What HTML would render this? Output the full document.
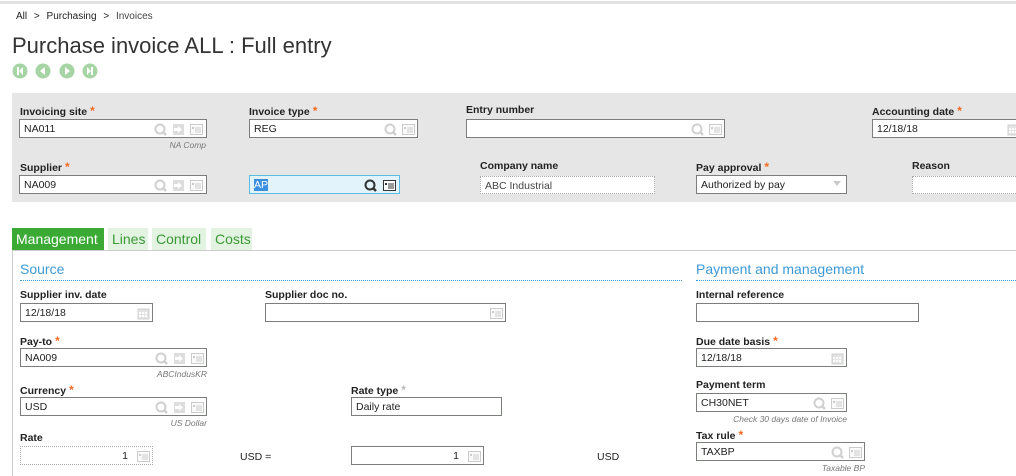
<!DOCTYPE html>
<html><head><meta charset="utf-8"><style>
*{box-sizing:border-box;margin:0;padding:0}
body{width:1016px;height:476px;overflow:hidden;background:#fff;font-family:"Liberation Sans",sans-serif;color:#222;position:relative}
.a{position:absolute}
.lb{position:absolute;font-size:10.5px;font-weight:bold;color:#222;white-space:nowrap}
.st{color:#f26b21;font-size:12px;margin-left:3px}
.sg{color:#bbb;font-size:12px;margin-left:3px}
.in{position:absolute;height:19px;border:1px solid #7a7f7a;background:#fff;font-size:10.5px;padding:3px 4px;white-space:nowrap;overflow:hidden}
.dt{border:1px dotted #aaa}
.ic{position:absolute;top:3px}
.sub{position:absolute;font-size:8.5px;font-style:italic;color:#777;text-align:right;white-space:nowrap}
.tab{position:absolute;top:228px;height:22px;font-size:14px;padding:3px 4px;color:#3a9a35;background:#e2f3e2}
.h{position:absolute;font-size:14px;color:#3d9ad8}
.dl{position:absolute;border-top:1px dotted #3d9ad8;height:0}
</style></head><body>
<div class="a" style="left:0;top:1px;width:1016px;height:3px;background:#e3e3e3"></div>
<div class="a" style="left:16px;top:11px;font-size:10px">All <span style="margin:0 4px">&gt;</span> Purchasing <span style="margin:0 4px">&gt;</span> <span style="color:#444">Invoices</span></div>
<div class="a" style="left:12px;top:33px;font-size:22px;color:#333">Purchase invoice ALL : Full entry</div>
<svg class="a" style="left:12px;top:63px" width="88" height="16">
<g fill="#a6d4a4"><circle cx="8" cy="8" r="7.5"/><circle cx="31" cy="8" r="7.5"/><circle cx="55" cy="8" r="7.5"/><circle cx="78" cy="8" r="7.5"/></g>
<g fill="#fff"><rect x="5" y="4" width="2" height="8"/><path d="M11 4 L7 8 L11 12Z"/><path d="M33 4 L28 8 L33 12Z"/><path d="M53 4 L58 8 L53 12Z"/><path d="M75 4 L79 8 L75 12Z"/><rect x="79" y="4" width="2" height="8"/></g></svg>

<div class="a" style="left:12px;top:93px;width:1004px;height:109px;background:#e6e6e6"></div>

<svg width="0" height="0" style="position:absolute"><defs>
<g id="q"><circle cx="6" cy="6" r="4.5" fill="none" stroke="#d0d0d0" stroke-width="2"/><line x1="9" y1="9" x2="12" y2="12" stroke="#d0d0d0" stroke-width="2.5"/></g>
<g id="qd"><circle cx="6" cy="6" r="4.5" fill="none" stroke="#333" stroke-width="2"/><line x1="9" y1="9" x2="12" y2="12" stroke="#333" stroke-width="2.5"/></g>
<g id="ar"><rect x="1" y="1" width="11" height="11" fill="#ddd"/><path d="M2 5h4V3l4 3.5-4 3.5V8H2z" fill="#fff"/></g>
<g id="ls"><rect x="0.5" y="1.5" width="12" height="10" fill="#fafafa" stroke="#ccc"/><line x1="5" y1="5" x2="11" y2="5" stroke="#ccc"/><line x1="5" y1="7" x2="11" y2="7" stroke="#ccc"/><line x1="5" y1="9" x2="11" y2="9" stroke="#ccc"/><rect x="2" y="4" width="2" height="2" fill="#ccc"/></g>
<g id="lsd"><rect x="0.5" y="1.5" width="12" height="10" fill="#fff" stroke="#333"/><line x1="5" y1="5" x2="11" y2="5" stroke="#333"/><line x1="5" y1="7" x2="11" y2="7" stroke="#333"/><line x1="5" y1="9" x2="11" y2="9" stroke="#333"/><rect x="2" y="4" width="2" height="2" fill="#333"/></g>
<g id="cal"><rect x="1" y="2" width="11" height="10" fill="#e4e4e4" stroke="#d0d0d0"/><g fill="#fff"><rect x="2" y="5" width="2" height="2"/><rect x="5" y="5" width="2" height="2"/><rect x="8" y="5" width="2" height="2"/><rect x="2" y="8" width="2" height="2"/><rect x="5" y="8" width="2" height="2"/><rect x="8" y="8" width="2" height="2"/></g></g>
</defs></svg>

<!-- header fields -->
<div class="lb" style="left:20px;top:104px">Invoicing site<span class="st">*</span></div>
<div class="in" style="left:19px;top:119px;width:188px">NA011<svg class="ic" style="left:134px" width="52" height="13"><use href="#q"/><use href="#ar" x="18"/><use href="#ls" x="36"/></svg></div>
<div class="sub" style="left:150px;top:140px;width:56px">NA Comp</div>
<div class="lb" style="left:249px;top:104px">Invoice type<span class="st">*</span></div>
<div class="in" style="left:249px;top:119px;width:169px">REG<svg class="ic" style="left:134px" width="33" height="13"><use href="#q"/><use href="#ls" x="18"/></svg></div>
<div class="lb" style="left:466px;top:104px">Entry number</div>
<div class="in" style="left:466px;top:119px;width:259px"><svg class="ic" style="left:224px" width="33" height="13"><use href="#q"/><use href="#ls" x="18"/></svg></div>
<div class="lb" style="left:872px;top:104px">Accounting date<span class="st">*</span></div>
<div class="in" style="left:872px;top:119px;width:160px">12/18/18<svg class="ic" style="left:134px" width="14" height="13"><use href="#cal"/></svg></div>

<div class="lb" style="left:20px;top:160px">Supplier<span class="st">*</span></div>
<div class="in" style="left:19px;top:175px;width:188px">NA009<svg class="ic" style="left:134px" width="52" height="13"><use href="#q"/><use href="#ar" x="18"/><use href="#ls" x="36"/></svg></div>
<div class="in" style="left:249px;top:175px;width:151px;background:#e2f3fb;border-color:#5bbde3"><span style="background:#3b8fe0;color:#fff">AP</span><svg class="ic" style="left:114px" width="33" height="13"><use href="#qd"/><use href="#lsd" x="19"/></svg></div>
<div class="lb" style="left:480px;top:160px">Company name</div>
<div class="in dt" style="left:480px;top:176px;width:175px;height:18px;color:#444">ABC Industrial</div>
<div class="lb" style="left:696px;top:160px">Pay approval<span class="st">*</span></div>
<div class="in" style="left:696px;top:175px;width:151px">Authorized by pay<svg class="ic" style="left:136px;top:5px" width="8" height="5"><path d="M0 0h8L4 5z" fill="#ccc"/></svg></div>
<div class="lb" style="left:912px;top:160px">Reason</div>
<div class="in dt" style="left:912px;top:176px;width:120px;height:18px"></div>

<!-- tabs -->
<div class="tab" style="left:12px;width:92px;background:#3aaa35;color:#fff">Management</div>
<div class="tab" style="left:108px;width:40px">Lines</div>
<div class="tab" style="left:152px;width:54px">Control</div>
<div class="tab" style="left:211px;width:41px">Costs</div>
<div class="a" style="left:12px;top:250px;width:1004px;height:1px;background:#ccc"></div>
<div class="a" style="left:12px;top:250px;width:1px;height:226px;background:#ccc"></div>

<div class="h" style="left:20px;top:261px">Source</div>
<div class="dl" style="left:20px;top:280px;width:662px"></div>
<div class="h" style="left:696px;top:261px">Payment and management</div>
<div class="dl" style="left:696px;top:280px;width:320px"></div>

<div class="lb" style="left:20px;top:289px">Supplier inv. date</div>
<div class="in" style="left:20px;top:303px;width:133px">12/18/18<svg class="ic" style="left:116px" width="14" height="13"><use href="#cal"/></svg></div>
<div class="lb" style="left:265px;top:289px">Supplier doc no.</div>
<div class="in" style="left:265px;top:303px;width:241px"><svg class="ic" style="left:224px" width="14" height="13"><use href="#ls"/></svg></div>

<div class="lb" style="left:20px;top:334px">Pay-to<span class="st">*</span></div>
<div class="in" style="left:20px;top:348px;width:187px">NA009<svg class="ic" style="left:134px" width="52" height="13"><use href="#q"/><use href="#ar" x="18"/><use href="#ls" x="36"/></svg></div>
<div class="sub" style="left:120px;top:369px;width:87px">ABCIndusKR</div>

<div class="lb" style="left:20px;top:383px">Currency<span class="st">*</span></div>
<div class="in" style="left:20px;top:397px;width:187px">USD<svg class="ic" style="left:134px" width="52" height="13"><use href="#q"/><use href="#ar" x="18"/><use href="#ls" x="36"/></svg></div>
<div class="sub" style="left:120px;top:418px;width:87px">US Dollar</div>
<div class="lb" style="left:351px;top:383px">Rate type<span class="sg">*</span></div>
<div class="in" style="left:351px;top:397px;width:151px">Daily rate</div>

<div class="lb" style="left:20px;top:432px">Rate</div>
<div class="in dt" style="left:20px;top:446px;width:133px;text-align:right;padding-right:24px">1<svg class="ic" style="left:116px" width="14" height="13"><use href="#ls"/></svg></div>
<div class="a" style="left:240px;top:451px;font-size:10.5px">USD =</div>
<div class="in" style="left:351px;top:446px;width:133px;text-align:right;padding-right:24px">1<svg class="ic" style="left:116px" width="14" height="13"><use href="#ls"/></svg></div>
<div class="a" style="left:597px;top:451px;font-size:10.5px">USD</div>

<div class="lb" style="left:696px;top:289px">Internal reference</div>
<div class="in" style="left:696px;top:303px;width:223px"></div>
<div class="lb" style="left:696px;top:334px">Due date basis<span class="st">*</span></div>
<div class="in" style="left:696px;top:348px;width:151px">12/18/18<svg class="ic" style="left:134px" width="14" height="13"><use href="#cal"/></svg></div>
<div class="lb" style="left:696px;top:379px">Payment term</div>
<div class="in" style="left:696px;top:393px;width:151px">CH30NET<svg class="ic" style="left:116px" width="33" height="13"><use href="#q"/><use href="#ls" x="18"/></svg></div>
<div class="sub" style="left:700px;top:414px;width:147px">Check 30 days date of Invoice</div>
<div class="lb" style="left:696px;top:428px">Tax rule<span class="st">*</span></div>
<div class="in" style="left:696px;top:442px;width:169px">TAXBP<svg class="ic" style="left:134px" width="33" height="13"><use href="#q"/><use href="#ls" x="18"/></svg></div>
<div class="sub" style="left:760px;top:463px;width:105px">Taxable BP</div>
</body></html>
